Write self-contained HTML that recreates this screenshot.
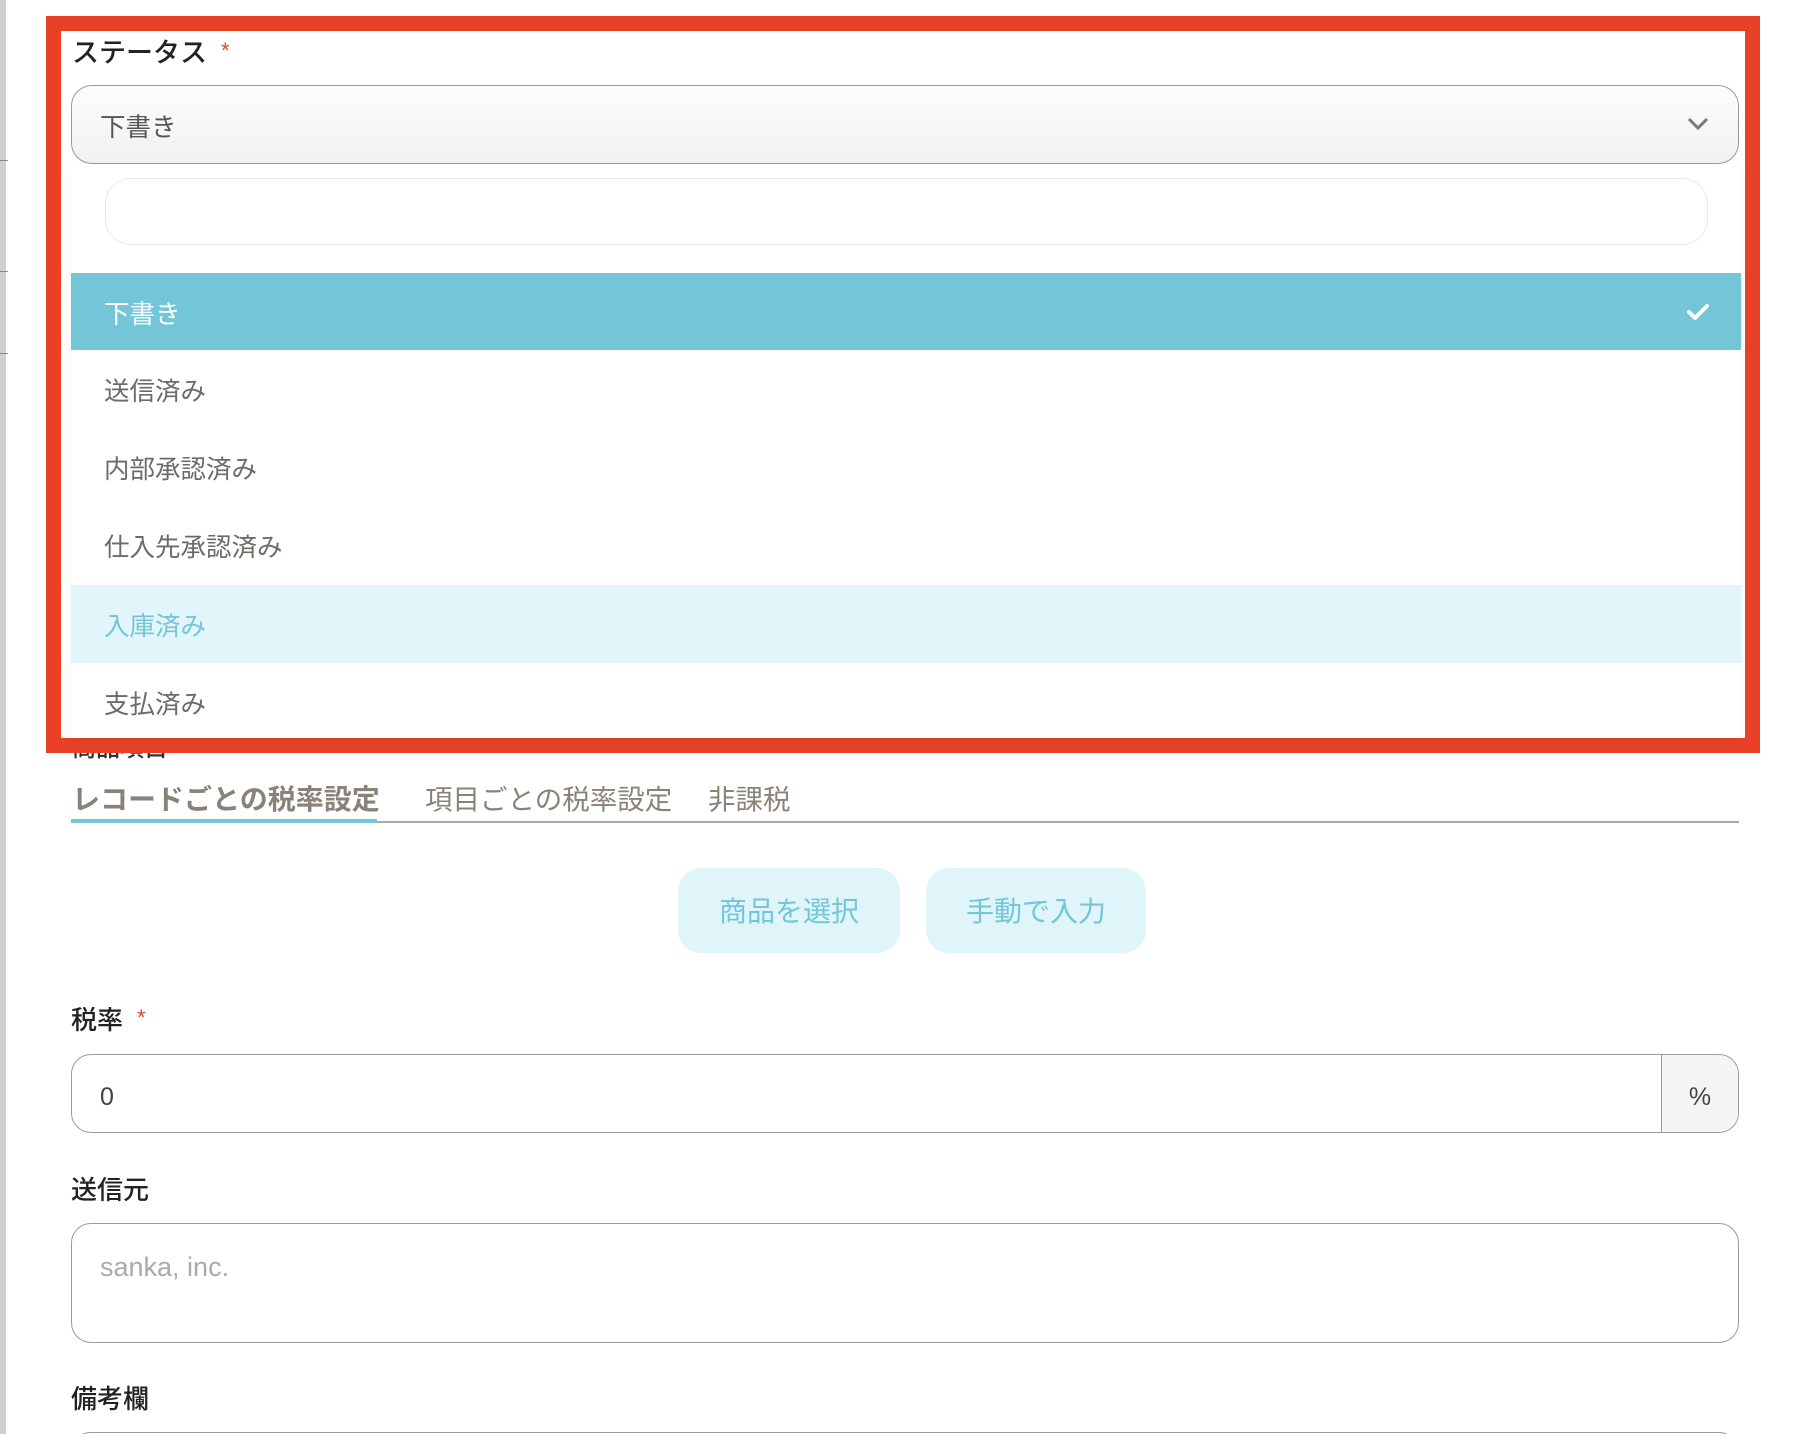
<!DOCTYPE html>
<html style="width:1806px;height:1434px;overflow:hidden"><head><meta charset="utf-8"><style>
*{box-sizing:border-box;margin:0;padding:0}
body{width:1806px;height:1434px;position:relative;overflow:hidden;background:#fff;font-family:"Liberation Sans","Noto Sans CJK JP",sans-serif;}
.abs{position:absolute}
.lbl{position:absolute;font-size:26px;color:#222;line-height:1;font-weight:500}
.star{color:#e8442a;font-size:22px;margin-left:14px;vertical-align:top}
.opt{position:absolute;left:71px;width:1670px;height:78px;font-size:25.5px;color:#6e6a66;padding-left:33px;line-height:84px}
</style></head><body>
<div class="abs" style="left:0;top:0;width:6px;height:1434px;background:#cfcfcf"></div>
<div class="abs" style="left:0;top:160px;width:8px;height:1px;background:#888"></div>
<div class="abs" style="left:0;top:271px;width:8px;height:1px;background:#888"></div>
<div class="abs" style="left:0;top:353px;width:8px;height:1px;background:#888"></div>

<div class="lbl" style="left:72px;top:737px;font-size:24px;color:#333">商品項目</div>

<div class="abs" style="left:72px;top:786px;font-size:28px;font-weight:700;color:#8a8278;line-height:1">レコードごとの税率設定</div>
<div class="abs" style="left:425px;top:786px;font-size:27.5px;color:#8a8278;line-height:1">項目ごとの税率設定</div>
<div class="abs" style="left:708px;top:786px;font-size:27.5px;color:#8a8278;line-height:1">非課税</div>
<div class="abs" style="left:71px;top:821px;width:1668px;height:2px;background:#a8a8a8"></div>
<div class="abs" style="left:71px;top:819px;width:306px;height:4px;background:#73c5d8"></div>

<div class="abs" style="left:678px;top:868px;width:222px;height:85px;border-radius:23px;background:#e0f5fa;color:#73c5d8;font-size:28px;text-align:center;line-height:88px">商品を選択</div>
<div class="abs" style="left:926px;top:868px;width:220px;height:85px;border-radius:23px;background:#e0f5fa;color:#73c5d8;font-size:28px;text-align:center;line-height:88px">手動で入力</div>

<div class="lbl" style="left:71px;top:1007px">税率<span class="star">*</span></div>
<div class="abs" style="left:71px;top:1054px;width:1668px;height:79px;border:1.5px solid #9a9a9a;border-radius:20px;overflow:hidden">
 <div class="abs" style="left:28px;top:0;line-height:84px;font-size:25px;color:#444">0</div>
 <div class="abs" style="right:0;top:0;width:77px;height:100%;background:#f5f5f5;border-left:1.5px solid #9a9a9a;text-align:center;line-height:84px;font-size:25px;color:#444">%</div>
</div>
<div class="lbl" style="left:71px;top:1177px">送信元</div>
<div class="abs" style="left:71px;top:1223px;width:1668px;height:120px;border:1.5px solid #9a9a9a;border-radius:20px">
 <div class="abs" style="left:28px;top:30px;font-size:27px;color:#aaa;line-height:1">sanka, inc.</div>
</div>
<div class="lbl" style="left:71px;top:1386px">備考欄</div>
<div class="abs" style="left:0;top:1430px;width:1806px;height:4px;overflow:hidden">
 <div class="abs" style="left:71px;top:2px;width:1668px;height:40px;border:1.5px solid #9a9a9a;border-radius:20px"></div>
</div>

<div class="abs" style="left:46px;top:16px;width:1714px;height:737px;border:15px solid #e84128;background:#fff"></div>
<div class="lbl" style="left:72px;top:40px;font-size:27px">ステータス<span class="star">*</span></div>
<div class="abs" style="left:71px;top:85px;width:1668px;height:79px;border:1.5px solid #9a9a9a;border-radius:21px;background:linear-gradient(#fdfdfd,#f1f1f4)">
 <div class="abs" style="left:28px;top:0;line-height:84px;font-size:25.5px;color:#555">下書き</div>
 <svg class="abs" style="left:1614px;top:30px" width="24" height="16" viewBox="0 0 24 16"><path d="M3 3l9 9 9-9" fill="none" stroke="#7d776f" stroke-width="3"/></svg>
</div>
<div class="abs" style="left:71px;top:164px;width:1670px;height:574px;background:#fff;box-shadow:0 4px 10px rgba(0,0,0,.05);overflow:hidden">
 <div class="abs" style="left:34px;top:14px;width:1603px;height:67px;border:1.5px solid #ede8e3;border-radius:26px"></div>
</div>
<div class="opt" style="top:273px;height:77px;background:#73c5d8;color:#fff">下書き
 <svg class="abs" style="left:1615px;top:30px" width="24" height="18" viewBox="0 0 24 18"><path d="M3 9l6 6 12-12" fill="none" stroke="#fff" stroke-width="4" stroke-linecap="round" stroke-linejoin="round"/></svg></div>
<div class="opt" style="top:350px">送信済み</div>
<div class="opt" style="top:428px">内部承認済み</div>
<div class="opt" style="top:506px">仕入先承認済み</div>
<div class="opt" style="top:585px;background:#e1f5fa;color:#73c5d8">入庫済み</div>
<div class="opt" style="top:663px;height:75px">支払済み</div>
</body></html>
